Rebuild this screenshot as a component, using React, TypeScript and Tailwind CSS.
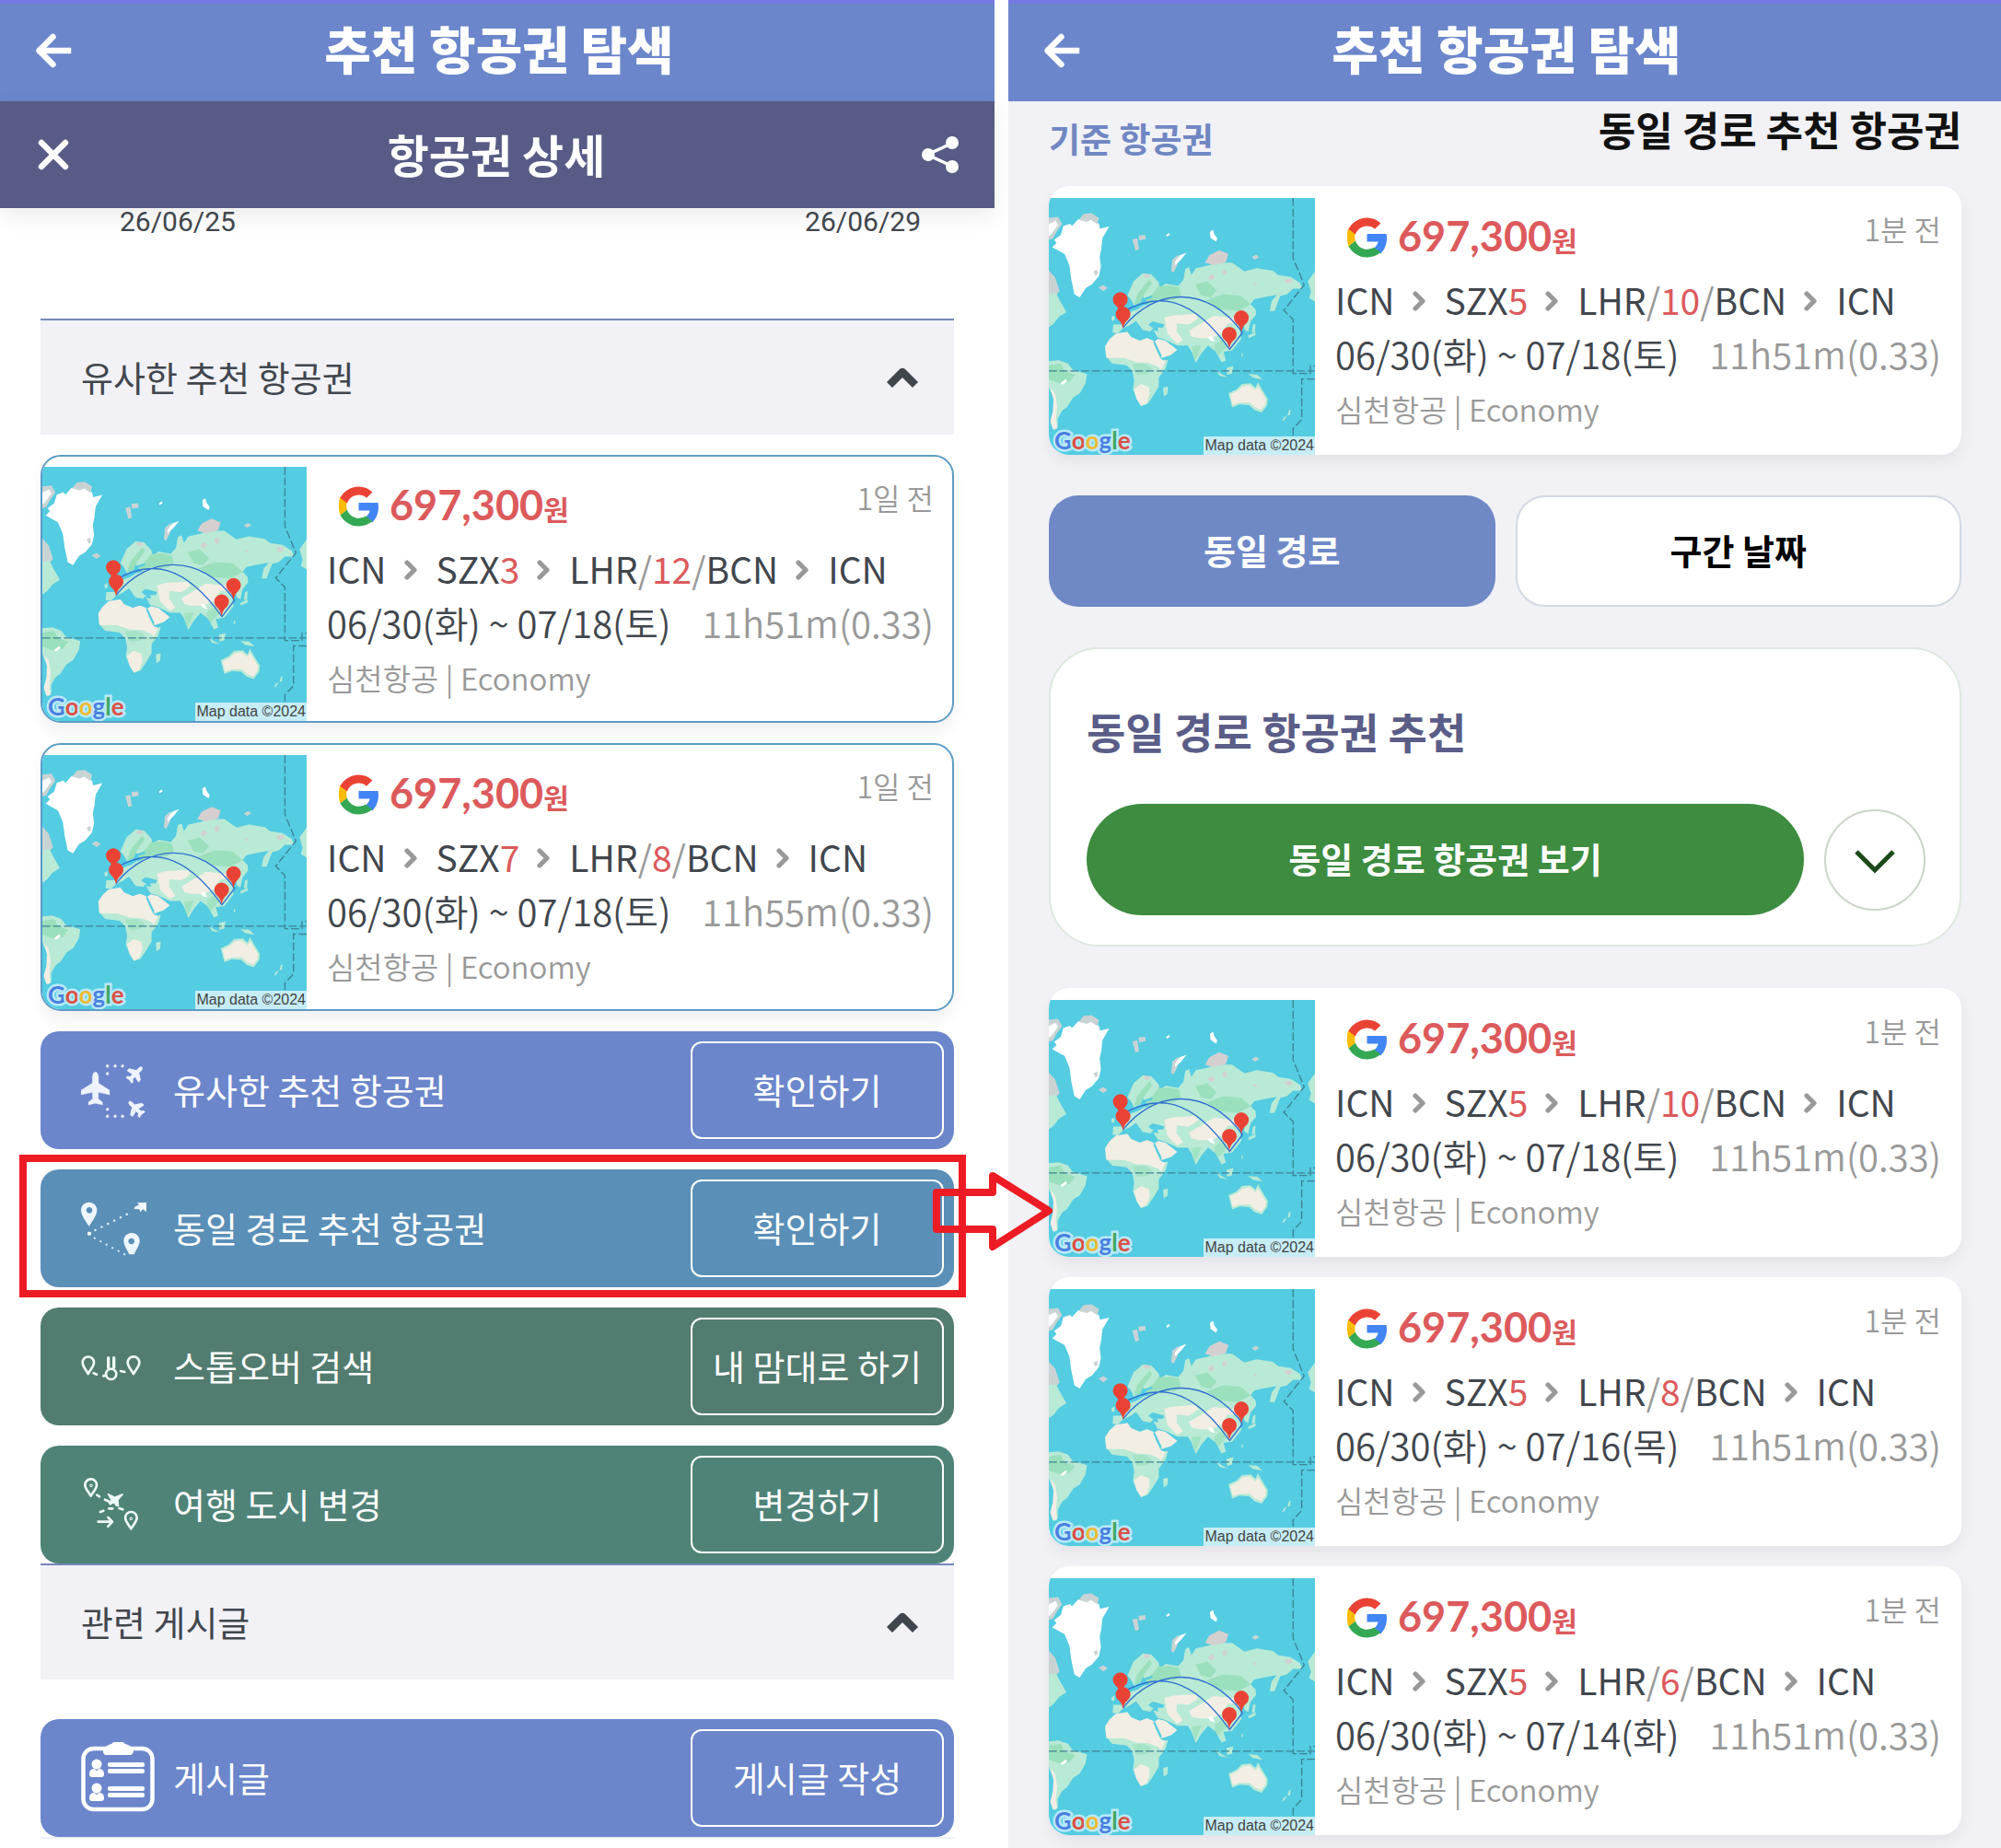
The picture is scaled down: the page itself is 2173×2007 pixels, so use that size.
import React from "react";

const KR = "font-['Noto_Sans_CJK_KR','Noto_Sans',sans-serif]";

function BackArrow() {
  return (
    <svg className="h-10 w-10" viewBox="0 0 40 40" fill="none" stroke="currentColor" strokeWidth="6.400" strokeLinecap="round" strokeLinejoin="round" aria-hidden="true">
      <path d="M19.500 5 4.500 20l15 15" />
      <path d="M6 20h30" strokeLinecap="square" />
    </svg>
  );
}

function CloseIcon() {
  return (
    <svg className="h-10 w-10" viewBox="0 0 40 40" fill="none" stroke="currentColor" strokeWidth="6.400" strokeLinecap="round" aria-hidden="true">
      <path d="M7 7l26 26M33 7 7 33" />
    </svg>
  );
}

function ShareIcon() {
  return (
    <svg className="h-10 w-[42px]" viewBox="0 0 42 40" fill="currentColor" aria-hidden="true">
      <path d="M35 7 7 20l28 13" fill="none" stroke="currentColor" strokeWidth="3.500" />
      <circle cx="34" cy="7" r="7" />
      <circle cx="8" cy="20" r="7" />
      <circle cx="34" cy="33" r="7" />
    </svg>
  );
}

function ChevronUp() {
  return (
    <svg className="h-6 w-9" viewBox="0 0 36 24" fill="none" stroke="#41464d" strokeWidth="8.500" strokeLinecap="butt" strokeLinejoin="round" aria-hidden="true">
      <path d="M4 21 18 7l14 14" />
    </svg>
  );
}

function StepChevron() {
  return (
    <svg className="mt-1 h-6 w-4 shrink-0" viewBox="0 0 16 24" fill="none" stroke="#999" strokeWidth="5.200" strokeLinecap="round" strokeLinejoin="round" aria-hidden="true">
      <path d="M3 4l8 8-8 8" />
    </svg>
  );
}

function GoogleG() {
  return (
    <svg className="h-[44px] w-[43px] shrink-0" viewBox="3 3 42 42" role="img" aria-label="Google">
      <path fill="#4285F4" d="M44.5 20H24v8.5h11.8c-.6 2.9-2.200 5.300-4.600 6.900l7.200 5.600C42.600 37.100 45 31.300 45 24.500c0-1.600-.2-3-.5-4.500z" />
      <path fill="#34A853" d="M24 45c5.900 0 10.900-1.900 14.500-5.300l-7.100-5.500c-2 1.300-4.500 2.200-7.400 2.200-5.700 0-10.600-3.900-12.300-9.100l-7.300 5.700C8 40.100 15.400 45 24 45z" />
      <path fill="#FBBC05" d="M11.700 27.500c-.5-1.300-.7-2.600-.7-4s.3-2.700.7-4l-7.300-5.700C3 17 3 20 3 24s.5 6.400 1.500 9.200z" />
      <path fill="#EA4335" d="M24 11.800c3.200 0 6.100 1.100 8.300 3.200l6.300-6.200C34.800 5.200 29.800 3 24 3 15.500 3 8.100 7.900 4.400 15l7.300 5.700C13.400 15.600 18.300 11.800 24 11.800z" />
    </svg>
  );
}

const PLANE =
  "M71 106C77 106 81 114 81 124V142L117 165V180L81 172L80 193L94 204V213L71 208L48 213V204L62 193L61 172L24 180V165L61 142V124C61 114 65 106 71 106Z";

function SimilarIcon() {
  return (
    <svg className="h-20 w-20" viewBox="24 45 240 240" fill="#eef3ff" stroke="#eef3ff" strokeLinejoin="round" aria-hidden="true">
      <path d={PLANE} />
      <path d={PLANE} strokeWidth="5" transform="translate(201 112) rotate(45) scale(.56) translate(-71 -160)" />
      <path d={PLANE} strokeWidth="5" transform="translate(202 224) rotate(-45) scale(.56) translate(-71 -160)" />
      {[[110, 86], [135, 86], [159, 86], [110, 111], [110, 227], [110, 250], [135, 250], [159, 250]].map(([x, y]) => (
        <circle key={`${x}-${y}`} cx={x} cy={y} r="4.500" />
      ))}
    </svg>
  );
}

function SameRouteIcon() {
  return (
    <svg className="h-20 w-20" viewBox="24 493 240 240" fill="#eef6ff" aria-hidden="true">
      <path fillRule="evenodd" d="M50 528c15 0 26 11 26 26 0 17-14 33-26 53-12-20-26-36-26-53 0-15 11-26 26-26zm1 16a10 10 0 1 0 .1 0z" />
      <path fillRule="evenodd" d="M189 628c15 0 26 11 26 26 0 15-11 27-18 44h-16c-7-17-18-29-18-44 0-15 11-26 26-26zm-1 17a10 10 0 1 0 .1 0z" />
      <path d="M207 529h30v31l-11-9-9 9-3-9-17-1 2-7 14-7z" />
      <rect x="45" y="624" width="12" height="12" rx="3" />
      <g fill="none" stroke="#dcf3ff" strokeLinecap="round" strokeWidth="7">
        <path d="M70 619 190 559" strokeDasharray="1 22" />
        <path d="M68 645 170 700" strokeDasharray="1 21" strokeWidth="6" />
      </g>
    </svg>
  );
}

function StopoverIcon() {
  return (
    <svg className="h-20 w-20" viewBox="24 12 240 240" fill="none" stroke="#effaf5" strokeWidth="8" strokeLinecap="round" strokeLinejoin="round" aria-hidden="true">
      <path d="M47 156C38 140 29 131 29 119a18.500 18.500 0 0 1 37 0c0 12-10 21-19 37z" />
      <path d="M195 156c-9-16-19-25-19-37a19 19 0 0 1 38 0c0 12-10 21-19 37z" />
      <circle cx="122" cy="157" r="17" />
      <path d="M113 104v32M131 104v32" strokeWidth="10" />
      <path d="M65 154l10 4M97 163l8-2M153 147l13 3" />
    </svg>
  );
}

function CityChangeIcon() {
  return (
    <svg className="h-20 w-20" viewBox="24 462 240 240" fill="none" stroke="#effaf8" strokeWidth="8" strokeLinecap="round" strokeLinejoin="round" aria-hidden="true">
      <path d="M56 554c-8-14-19-24-19-36a19 19 0 0 1 38 0c0 12-11 22-19 36z" />
      <path d="M187 661c-8-14-19-24-19-36a19 19 0 0 1 38 0c0 12-11 22-19 36z" />
      <circle cx="57" cy="520" r="1.500" />
      <circle cx="187" cy="628" r="1.500" />
      <path d="M76 551l8 5M102 566l11 5M87 606l10-4M115 595h12M148 594l12 4" />
      <path d="M80 638h45M112 624l14 14-14 15" />
      <path d="M112 548l22 10 26-10-16 19 2 20-8-2-6-10-13 7-4-5 8-10z" fill="#effaf8" strokeWidth="4" />
    </svg>
  );
}

function BoardIcon() {
  return (
    <svg className="h-20 w-20" viewBox="0 0 80 80" fill="white" aria-hidden="true">
      <rect x="2.500" y="8" width="75" height="66" rx="11" fill="none" stroke="white" strokeWidth="4.500" />
      <path d="M30 4c2-1 4-1 5-3h11c1 2 3 2 5 3 4 2 6 4 6 7 0 2-2 4-4 4H27c-2 0-3-2-3-4 0-3 2-5 6-7z" />
      {[20, 46].map((y) => (
        <g key={y}>
          <circle cx="17" cy={y + 5} r="5.500" />
          <path d={`M9 ${y + 16}c0-4 2-6 5-6l3 2 3-2c3 0 5 2 5 6 0 2-1 3-3 3H12c-2 0-3-1-3-3z`} />
          <rect x="29" y={y + 3} width="40" height="5" rx="2" />
          <rect x="29" y={y + 10} width="40" height="5" rx="2" />
        </g>
      ))}
    </svg>
  );
}

const LAND = "#b9ead6";
const GREEN = "#9be0bd";
const SAND = "#f3eee4";
const ICE = "#c9d3d4";
const SEA = "#54cce2";

function Pin({ x, y }: { x: number; y: number }) {
  return <path fill="#ea4335" d={`M${x} ${y}c-3-16-8-23-15-29a24 24 0 1 1 30 0c-7 6-12 13-15 29z`} />;
}

function WorldMap() {
  return (
    <svg className="block h-full w-full" viewBox="45 81 864 830" preserveAspectRatio="none" aria-hidden="true">
      <rect x="45" y="81" width="864" height="830" fill={SEA} />
      <path fill={ICE} d="M45 145L75 142 88 165 70 190 58 212 45 216ZM45 315L66 338 80 382 64 400 45 392Z" />
      <path fill="#fff" d="M45 165L67 155 75 168 55 195 45 204Z" />
      <path fill={LAND} d="M45 392L68 388 82 415 102 450 78 465 60 488 45 498Z" />
      <path fill="#fff" d="M92 172L114 164 120 172 140 150 182 140 208 166 211 180 241 173 219 211 215 247 210 270 214 304 207 334 185 360 165 372 145 402 128 392 118 345 112 300 96 262 56 240 70 226 62 216 84 200Z" />
      <path fill={ICE} d="M142 152L158 132 184 130 208 146 202 166 182 152 168 158ZM190 318L202 312 204 326 196 332ZM206 370L222 362 236 372 222 382Z" />
      <path fill={ICE} d="M316 215L332 211 338 247 326 251ZM336 202L358 200 360 214 338 218ZM442 316L446 280 466 264 462 298 450 322ZM704 272L718 264 728 272 714 280Z" />
      <path fill="#fff" d="M454 288L470 266 492 258 474 280 456 298ZM568 190L578 184 582 198 592 212 588 222 570 210ZM426 200L436 194 438 200 428 206Z" />
      <path
        fill={LAND}
        d="M300 396L320 350 350 324 378 328 402 354 404 372 425 358 465 365 482 345 488 310 500 304 508 330 522 308 560 300 592 290 640 290 680 318 720 308 772 316 790 330 830 336 860 355 868 374 838 374 818 392 796 398 778 446 762 446 768 415 785 394 740 402 712 408 700 424 716 440 718 458 700 480 692 514 680 506 678 488 664 500 670 536 640 574 612 578 620 606 606 612 586 576 562 558 540 584 522 614 508 576 496 558 462 558 425 540 398 532 384 508 400 512 396 490 374 512 350 508 328 478 308 492 286 502 270 518 252 516 254 490 284 490 282 470 312 448 334 440 352 428 372 424 352 402 346 382 334 396 336 420 322 428 310 406Z"
      />
      <path fill={GREEN} d="M384 388L400 366 440 364 468 370 474 396 452 412 400 410 372 424 356 408ZM356 362L372 344 380 356 352 396 342 420 322 424 332 392ZM520 360L560 350 590 380 570 402 540 396ZM556 412L610 392 668 396 700 424 660 446 600 440Z" />
      <path fill={SEA} d="M368 490L382 480 400 484 420 490 416 500 380 500ZM432 482L450 478 450 492 460 512 444 514 440 496ZM350 405L380 396 382 402 354 412Z" />
      <path fill={SAND} d="M420 468L450 460 520 456 530 470 500 490 460 486 460 512 480 540 462 552 430 520ZM500 510L540 486 580 462 640 468 690 462 666 486 626 486 606 520 572 534 530 534 508 528Z" />
      <path fill={SAND} d="M388 544L400 536 424 542 462 572 442 588 412 598 400 580Z" />
      <path fill={GREEN} d="M582 556L606 540 626 558 606 578 596 590 584 574ZM508 560L540 556 528 590 518 606Z" opacity=".8" />
      <path
        fill={LAND}
        d="M262 520L300 514 312 530 340 542 364 534 384 542 396 572 412 606 432 604 424 632 402 660 402 690 384 720 366 746 344 754 330 730 318 700 322 670 316 640 298 622 250 616 230 592 228 560 242 538Z"
      />
      <path fill={SAND} d="M262 520L300 514 312 530 340 542 364 534 384 542 392 570 406 600 424 608 410 636 400 626 370 614 330 612 290 598 232 598 228 560 242 538Z" />
      <path fill={GREEN} d="M316 618L352 616 380 630 364 650 330 652Z" opacity=".7" />
      <path fill={SAND} d="M322 698L344 682 370 692 372 716 362 744 344 752 330 730Z" />
      <path fill={SEA} d="M384 548L390 546 412 592 406 594Z" />
      <path fill={LAND} d="M416 694L432 690 430 714 418 722ZM45 608L77 605 107 616 122 636 169 650 164 680 146 712 124 726 104 756 88 768 74 794 74 820 62 832 50 800 60 770 62 732 48 700 45 690Z" />
      <path fill={SAND} d="M50 694L66 714 72 754 68 794 72 826 58 828 50 804 58 770 60 732Z" />
      <path fill={GREEN} d="M45 622L84 616 96 640 130 652 112 676 80 680 45 668Z" />
      <path fill="#fff" d="M82 680L100 666 104 674 90 684ZM560 530L576 528 584 546 570 542Z" />
      <path fill={LAND} d="M586 632L602 648 626 660 600 656ZM622 630L644 624 640 648 624 652ZM692 650L722 652 738 668 708 662ZM692 526L716 514 716 524 694 534ZM708 490L716 488 714 514 704 516ZM886 350L909 318V416L890 404 896 384Z" />
      <path fill={LAND} d="M628 712L654 700 672 682 700 680 716 694 724 676 740 704 756 730 754 750 736 774 712 766 695 750 665 748 640 758Z" />
      <path fill={SAND} d="M634 716L656 706 674 690 696 686 716 702 724 690 736 708 750 732 748 748 734 766 714 758 698 742 664 742 642 750Z" />
      <path fill={LAND} d="M824 768L830 764 828 782 820 784ZM808 790L818 784 810 798 802 802ZM672 580L676 590 670 596ZM248 466L258 460 258 476 250 478Z" />
      <path fill="#d5cfd0" d="M552 290L566 266 598 250 628 262 620 288 580 298ZM562 336L576 326 584 338 570 348ZM606 318L620 312 624 326 612 332ZM350 332L364 326 376 334 360 340ZM808 346L830 342 836 354 818 358ZM706 356L718 354 720 364Z" />
      <g fill="none" stroke="#3f8296" strokeWidth="4" strokeDasharray="26 9">
        <path d="M45 640h864" />
        <path d="M838 81V275L874 362 808 444 838 474V648H894V624H909M909 666H866V796L838 826V850" />
      </g>
      <path fill="none" stroke="#2f6fd0" strokeWidth="4" d="M277 454C400 380 510 400 632 570L674 516M286 500C390 370 560 360 674 516" />
      <Pin x={277} y={457} />
      <Pin x={286} y={504} />
      <Pin x={670} y={516} />
      <Pin x={631} y={569} />
    </svg>
  );
}

interface Flight {
  ago: string;
  first: number;
  second: number;
  dates: string;
  time: string;
}

function FlightCard({ flight, outlined }: { flight: Flight; outlined?: boolean }) {
  return (
    <article
      className={
        outlined
          ? "flex h-[291px] overflow-hidden rounded-[22px] border-2 border-[#5d9dc6] bg-white shadow-[0_10px_16px_rgba(0,0,0,0.06)]"
          : "flex h-[292px] overflow-hidden rounded-[22px] bg-white shadow-[0_8px_16px_rgba(0,0,0,0.06)]"
      }
    >
      <div className={outlined ? "relative mt-[11px] w-[287px] shrink-0" : "relative mt-[13px] w-[289px] shrink-0"}>
        <WorldMap />
        <span className="absolute bottom-0 left-1.5 font-['Lato',sans-serif] text-[26px] leading-8 font-bold [paint-order:stroke] [-webkit-text-stroke:5px_#b9e9f7]">
          <span className="text-[#4a7fe0]">G</span>
          <span className="text-[#dc5045]">o</span>
          <span className="text-[#eebb35]">o</span>
          <span className="text-[#4a7fe0]">g</span>
          <span className="text-[#3fa862]">l</span>
          <span className="text-[#dc5045]">e</span>
        </span>
        <span className="absolute right-0 bottom-0 bg-[#c6edf6] px-px font-['Liberation_Sans',sans-serif] text-base leading-5 whitespace-nowrap text-[#444]">
          Map data ©2024
        </span>
      </div>
      <div className={outlined ? "min-w-0 flex-1 pt-[19px] pr-5 pl-[22px]" : "min-w-0 flex-1 px-[22px] pt-[21px]"}>
        <div className="flex h-[70px] items-center pl-[13px]">
          <GoogleG />
          <p className="ml-3 flex items-baseline text-[#dc5a5c]">
            <strong className="font-['Lato',sans-serif] text-[45px] leading-[60px] font-bold">697,300</strong>
            <span className="text-[30px] leading-[60px] font-bold">원</span>
          </p>
          <time className="mb-5 ml-auto text-[32px] leading-10 font-[350] text-[#999]">{flight.ago}</time>
        </div>
        <div className="flex h-16 items-center gap-[19px] text-[39px] leading-[60px] font-normal whitespace-nowrap text-[#41464d]">
          <span>ICN</span>
          <StepChevron />
          <span>
            SZX<span className="text-[#dc5a5c]">{flight.first}</span>
          </span>
          <StepChevron />
          <span>
            LHR<span className="text-[#999]">/</span>
            <span className="text-[#dc5a5c]">{flight.second}</span>
            <span className="text-[#999]">/</span>BCN
          </span>
          <StepChevron />
          <span>ICN</span>
        </div>
        <div className="flex h-[54px] items-center justify-between text-[40px] leading-[54px] font-[350] whitespace-nowrap text-[#41464d]">
          <span>{flight.dates}</span>
          <span className="text-[#999]">{flight.time}</span>
        </div>
        <p className="text-[33px] leading-[66px] font-[350] text-[#999]">심천항공 | Economy</p>
      </div>
    </article>
  );
}

function AppBar() {
  return (
    <header className="flex h-[110px] items-center bg-[#6b86cb] px-[38px] text-white shadow-[inset_0_4px_0_#7779e2]">
      <button type="button" aria-label="뒤로">
        <BackArrow />
      </button>
      <h1 className="mr-9 flex-1 pb-2 text-center text-[55px] leading-[80px] font-black">추천 항공권 탐색</h1>
    </header>
  );
}

function SectionHeader({ title }: { title: string }) {
  return (
    <button type="button" className="flex h-[126px] w-full items-center justify-between border-t-2 border-[#7487b8] bg-[#f1f1f6] pr-[38px] pb-0.5 pl-11 text-left">
      <span className="text-[38px] leading-[56px] font-normal text-[#41464d]">{title}</span>
      <ChevronUp />
    </button>
  );
}

interface ActionRowProps {
  className: string;
  icon: React.ReactNode;
  label: string;
  action: string;
}

function ActionRow({ className, icon, label, action }: ActionRowProps) {
  return (
    <div className={`flex h-32 items-center rounded-[20px] pr-[11px] pl-11 text-[38px] leading-[56px] font-normal text-white ${className}`}>
      {icon}
      <span className="ml-5 pb-0.5">{label}</span>
      <button type="button" className="ml-auto h-[106px] w-[275px] rounded-xl border-2 border-white pb-0.5">
        {action}
      </button>
    </div>
  );
}

const similar: Flight[] = [
  { ago: "1일 전", first: 3, second: 12, dates: "06/30(화) ~ 07/18(토)", time: "11h51m(0.33)" },
  { ago: "1일 전", first: 7, second: 8, dates: "06/30(화) ~ 07/18(토)", time: "11h55m(0.33)" },
];

const sameRoute: Flight[] = [
  { ago: "1분 전", first: 5, second: 10, dates: "06/30(화) ~ 07/18(토)", time: "11h51m(0.33)" },
  { ago: "1분 전", first: 5, second: 8, dates: "06/30(화) ~ 07/16(목)", time: "11h51m(0.33)" },
  { ago: "1분 전", first: 5, second: 6, dates: "06/30(화) ~ 07/14(화)", time: "11h51m(0.33)" },
];

function DetailScreen() {
  return (
    <section className="min-w-0 bg-white">
      <AppBar />
      <div className="flex h-[116px] items-center bg-[#575b85] px-[38px] text-white shadow-[0_8px_24px_rgba(0,0,0,0.08)]">
        <button type="button" aria-label="닫기">
          <CloseIcon />
        </button>
        <h2 className="flex-1 pb-0.5 text-center text-[49px] leading-[72px] font-bold">항공권 상세</h2>
        <button type="button" aria-label="공유">
          <ShareIcon />
        </button>
      </div>
      <div className="flex h-[120px] justify-between pr-20 pl-[130px] font-['Roboto',sans-serif] text-[30px] leading-[30px] text-[#41464d]">
        <time>26/06/25</time>
        <time>26/06/29</time>
      </div>
      <div className="px-11">
        <SectionHeader title="유사한 추천 항공권" />
        <div className="mt-[22px] flex flex-col gap-[22px]">
          {similar.map((f) => (
            <FlightCard key={f.first} flight={f} outlined />
          ))}
          <ActionRow className="bg-[#6b86cb]" icon={<SimilarIcon />} label="유사한 추천 항공권" action="확인하기" />
          <div className="relative">
            <ActionRow className="bg-[#5a8fb7]" icon={<SameRouteIcon />} label="동일 경로 추천 항공권" action="확인하기" />
            <div className="pointer-events-none absolute -top-4 -right-[13px] -bottom-[11px] -left-[23px] border-8 border-[#ed1c24]" />
            <svg className="pointer-events-none absolute top-0 -right-[108px] z-10 h-[90px] w-[132px]" viewBox="1012 1270 132 90" fill="none" stroke="#ed1c24" strokeWidth="8" strokeLinejoin="round" aria-hidden="true">
              <path d="M1017 1295h61v-18l61 38-61 39v-19h-61z" />
            </svg>
          </div>
          <ActionRow className="bg-[#527c6f]" icon={<StopoverIcon />} label="스톱오버 검색" action="내 맘대로 하기" />
          <ActionRow className="bg-[#4f8378]" icon={<CityChangeIcon />} label="여행 도시 변경" action="변경하기" />
        </div>
        <SectionHeader title="관련 게시글" />
        <div className="mt-[43px] border-b-2 border-[#eff1f8]">
          <ActionRow className="bg-[#6b86cb]" icon={<BoardIcon />} label="게시글" action="게시글 작성" />
        </div>
      </div>
    </section>
  );
}

function RecommendScreen() {
  return (
    <section className="min-w-0 bg-[#f1f1f6]">
      <AppBar />
      <div className="pr-[43px] pb-3 pl-11">
        <div className="flex h-[92px] items-start justify-between">
          <h2 className="mt-3 text-[37px] leading-[56px] font-bold text-[#7087c2]">기준 항공권</h2>
          <p className="text-[44px] leading-[60px] font-bold text-[#111]">동일 경로 추천 항공권</p>
        </div>
        <FlightCard flight={sameRoute[0]} />
        <div className="mt-11 grid grid-cols-2 gap-[22px]">
          <button type="button" className="h-[121px] rounded-[32px] bg-[#6f89c7] pb-1 text-[38px] leading-[56px] font-bold text-white">
            동일 경로
          </button>
          <button type="button" className="h-[121px] rounded-[32px] border-2 border-[#d3d8e2] bg-white pb-1 text-[38px] leading-[56px] font-bold text-black">
            구간 날짜
          </button>
        </div>
        <div className="mt-11 h-[325px] rounded-[54px] border-2 border-[#dfe8df] bg-white pt-[54px] pr-[37px] pl-[39px]">
          <h3 className="text-[46px] leading-[68px] font-bold text-[#5a5d87]">동일 경로 항공권 추천</h3>
          <div className="mt-[46px] flex items-center gap-[22px]">
            <button type="button" className="h-[121px] flex-1 rounded-full bg-[#3d8c40] pb-1 text-[38px] leading-[56px] font-bold text-white">
              동일 경로 항공권 보기
            </button>
            <button type="button" aria-label="펼치기" className="flex h-[110px] w-[110px] items-center justify-center rounded-full border-2 border-[#ccd5ca] bg-white">
              <svg className="mt-1 h-[26px] w-11" viewBox="0 0 44 26" fill="none" stroke="#1d4a1b" strokeWidth="5" aria-hidden="true">
                <path d="M2 2l20 20L42 2" />
              </svg>
            </button>
          </div>
        </div>
        <div className="mt-[45px] flex flex-col gap-[22px]">
          {sameRoute.map((f) => (
            <FlightCard key={f.second} flight={f} />
          ))}
        </div>
      </div>
    </section>
  );
}

export default function App() {
  return (
    <main className={`grid min-h-screen grid-cols-[1080fr_1078fr] gap-[15px] overflow-hidden bg-white ${KR}`}>
      <DetailScreen />
      <RecommendScreen />
    </main>
  );
}
